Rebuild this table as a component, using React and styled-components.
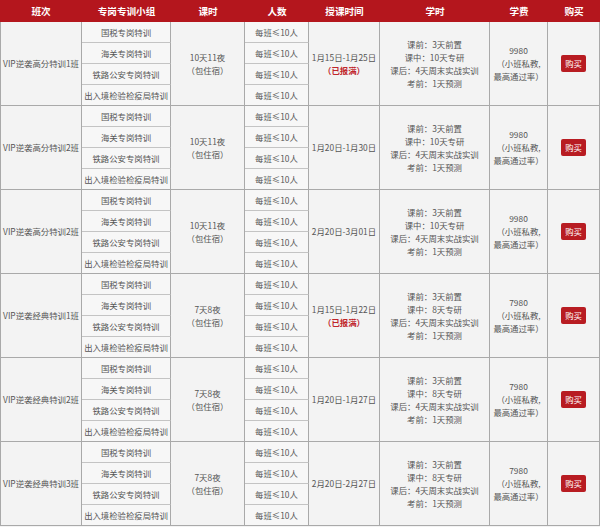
import React from 'react';
import styled, { createGlobalStyle } from 'styled-components';

const GlobalStyle = createGlobalStyle`
  html, body {
    margin: 0;
    padding: 0;
    background: #f3f3f3;
  }
  body {
    font-family: "Noto Sans CJK SC", "Noto Sans", sans-serif;
    color: #555;
  }
`;

const COLS = '82px 89px 74px 64px 71px 110px 58px 52px';

const Table = styled.div`
  width: 600px;
  border-left: 1px solid #a9a9a9;
  box-sizing: border-box;
`;

const HeaderRow = styled.div`
  display: grid;
  grid-template-columns: ${COLS};
  height: 22px;
  background: #b4161d;
  margin-left: -1px;
`;

const HeadCell = styled.div`
  display: flex;
  align-items: center;
  justify-content: center;
  color: #fff;
  font-size: 9.6px;
  font-weight: 700;
`;

const Group = styled.div`
  display: grid;
  grid-template-columns: ${COLS};
  grid-template-rows: repeat(4, 21px);
  margin-left: -1px;
`;

const Cell = styled.div`
  grid-row: ${p => (p.$span ? '1 / span 4' : 'auto')};
  grid-column: ${p => p.$col};
  display: flex;
  flex-direction: column;
  align-items: center;
  justify-content: center;
  text-align: center;
  box-sizing: border-box;
  border-right: 1px solid #a9a9a9;
  border-bottom: 1px solid ${p => (p.$sub && !p.$last ? '#c4c4c4' : '#a9a9a9')};
  border-left: ${p => (p.$first ? '1px solid #a9a9a9' : 'none')};
  background: ${p => (p.$sub ? '#f7f7f7' : '#f3f3f3')};
  font-size: 8.4px;
  line-height: 13px;
  color: #555;
  white-space: nowrap;
`;

const Full = styled.span`
  color: #c0262b;
  font-weight: 700;
`;

const BuyButton = styled.button`
  width: 25px;
  height: 17px;
  padding: 0;
  border: none;
  border-radius: 2px;
  background: #b81c22;
  color: #fff;
  font-family: inherit;
  font-size: 8.4px;
  line-height: 17px;
  cursor: pointer;
`;

const headers = ['班次', '专岗专训小组', '课时', '人数', '授课时间', '学时', '学费', '购买'];
const subjects = ['国税专岗特训', '海关专岗特训', '铁路公安专岗特训', '出入境检验检疫局特训'];

const groups = [
  { name: 'VIP逆袭高分特训1班', days: '10天11夜', date: '1月15日-1月25日', full: true, mid: '10天专研', fee: '9980' },
  { name: 'VIP逆袭高分特训2班', days: '10天11夜', date: '1月20日-1月30日', mid: '10天专研', fee: '9980' },
  { name: 'VIP逆袭高分特训2班', days: '10天11夜', date: '2月20日-3月01日', mid: '10天专研', fee: '9980' },
  { name: 'VIP逆袭经典特训1班', days: '7天8夜', date: '1月15日-1月22日', full: true, mid: '8天专研', fee: '7980' },
  { name: 'VIP逆袭经典特训2班', days: '7天8夜', date: '1月20日-1月27日', mid: '8天专研', fee: '7980' },
  { name: 'VIP逆袭经典特训3班', days: '7天8夜', date: '2月20日-2月27日', mid: '8天专研', fee: '7980' },
];

function ClassGroup({ g }) {
  return (
    <Group>
      <Cell $span $col={1} $first>{g.name}</Cell>
      {subjects.map((s, i) => (
        <Cell key={s} $sub $last={i === 3} $col={2} style={{ gridRow: i + 1 }}>{s}</Cell>
      ))}
      <Cell $span $col={3}>
        <span>{g.days}</span>
        <span>（包住宿）</span>
      </Cell>
      {subjects.map((s, i) => (
        <Cell key={s} $sub $last={i === 3} $col={4} style={{ gridRow: i + 1 }}>每班≤10人</Cell>
      ))}
      <Cell $span $col={5}>
        <span>{g.date}</span>
        {g.full && <Full>（已报满）</Full>}
      </Cell>
      <Cell $span $col={6}>
        <span>课前：3天前置</span>
        <span>课中：{g.mid}</span>
        <span>课后：4天周末实战实训</span>
        <span>考前：1天预测</span>
      </Cell>
      <Cell $span $col={7}>
        <span>{g.fee}</span>
        <span>（小班私教,</span>
        <span>最高通过率）</span>
      </Cell>
      <Cell $span $col={8}>
        <BuyButton>购买</BuyButton>
      </Cell>
    </Group>
  );
}

export default function App() {
  return (
    <>
      <GlobalStyle />
      <Table>
        <HeaderRow>
          {headers.map(h => <HeadCell key={h}>{h}</HeadCell>)}
        </HeaderRow>
        {groups.map((g, i) => <ClassGroup key={i} g={g} />)}
      </Table>
    </>
  );
}
